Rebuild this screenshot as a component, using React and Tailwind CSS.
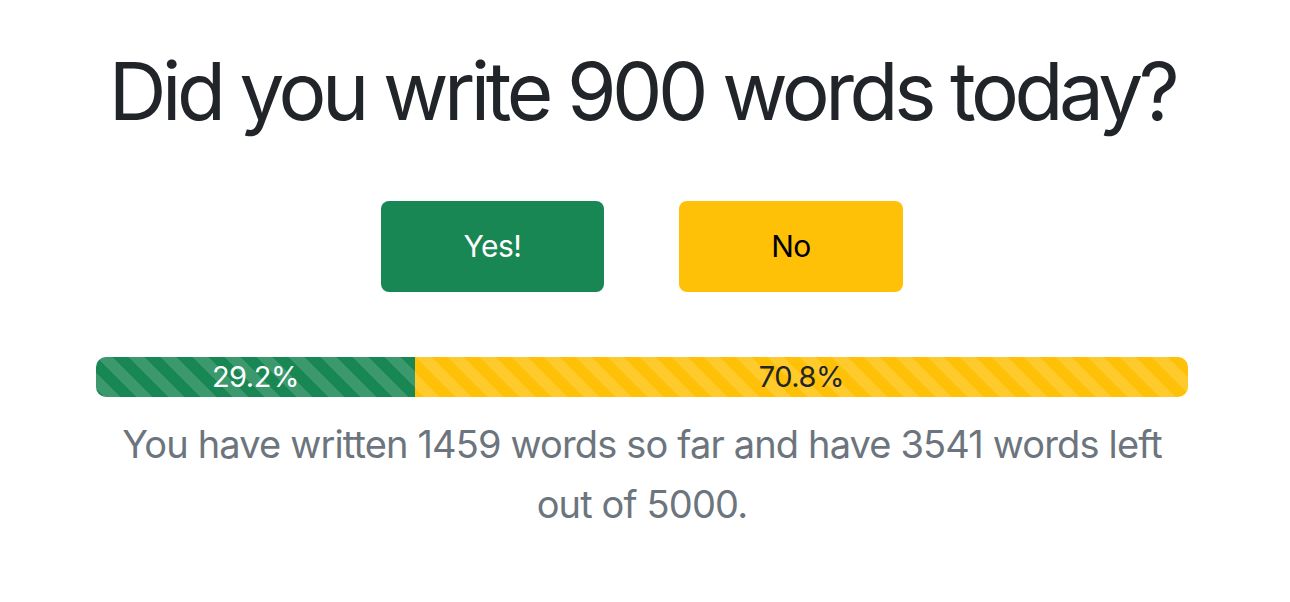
export default function App() {
  const written = 1459;
  const total = 5000;
  const left = total - written;
  const donePct = ((written / total) * 100).toFixed(1);
  const leftPct = ((left / total) * 100).toFixed(1);

  const stripes =
    "bg-[linear-gradient(45deg,rgba(255,255,255,.15)_25%,transparent_25%,transparent_50%,rgba(255,255,255,.15)_50%,rgba(255,255,255,.15)_75%,transparent_75%,transparent)] bg-size-[32px_32px]";

  return (
    <div className="min-h-screen bg-white font-['Inter','Liberation_Sans',sans-serif] flex flex-col items-center pt-[43px] pr-[6px]">
      <h1 className="text-[80px] leading-[96px] font-normal text-[#212529] text-center tracking-[-4.45px]">
        Did you write 900 words today?
      </h1>

      <div className="mt-[62px] flex gap-[75px]">
        <button className="w-[223px] h-[91px] rounded-[8px] bg-[#198754] text-white text-[30px] tracking-[-0.5px]">
          Yes!
        </button>
        <button className="w-[224px] h-[91px] rounded-[8px] bg-[#ffc107] text-black text-[30px] tracking-[-0.5px]">
          No
        </button>
      </div>

      <div className="mt-[65px] w-[1092px] h-[40px] rounded-[10px] overflow-hidden flex text-[29px] leading-[40px] tracking-[-0.5px]">
        <div
          className={`bg-[#198754] text-white text-center ${stripes}`}
          style={{ width: `${donePct}%` }}
        >
          {donePct}%
        </div>
        <div
          className={`bg-[#ffc107] text-[#212529] text-center ${stripes}`}
          style={{ width: `${leftPct}%` }}
        >
          {leftPct}%
        </div>
      </div>

      <p className="mt-[17px] w-[1092px] text-center text-[38px] leading-[60px] text-[#6c757d] tracking-[-0.85px]">
        You have written {written} words so far and have {left} words left out of {total}.
      </p>
    </div>
  );
}
